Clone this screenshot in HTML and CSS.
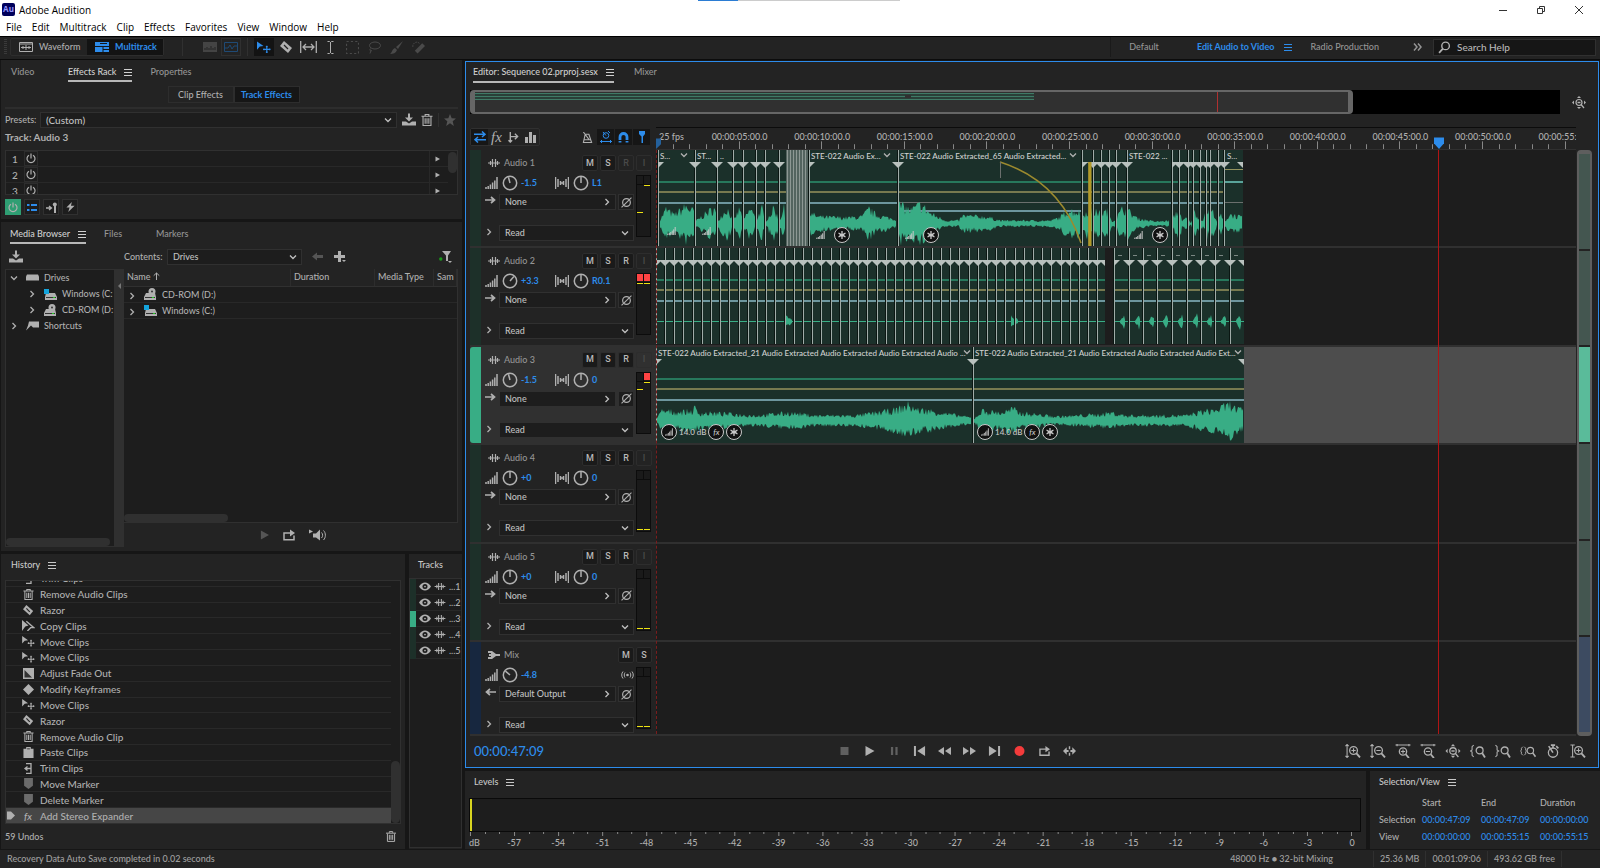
FILE: index.html
```html
<!DOCTYPE html>
<html lang="en">
<head>
    <meta charset="UTF-8">
    <meta name="viewport" content="width=device-width, initial-scale=1.0">
    <title>Adobe Audition</title>
    <link rel="stylesheet" href="styles.css">
</head>
<body>
    <!-- icon sprite -->
    <svg class="sprite" aria-hidden="true">
        <symbol id="i-menu" viewBox="0 0 8 8"><path d="M0 1.5h8M0 4.5h8M0 7.5h8" stroke="currentColor" fill="none"/></symbol>
        <symbol id="i-down" viewBox="0 0 8 8"><path d="M1 2.5l3 3 3-3" stroke="currentColor" fill="none" stroke-width="1.3"/></symbol>
        <symbol id="i-right" viewBox="0 0 8 8"><path d="M2.5 1l3 3-3 3" stroke="currentColor" fill="none" stroke-width="1.3"/></symbol>
        <symbol id="i-play" viewBox="0 0 10 10"><path d="M1 0l9 5-9 5z"/></symbol>
        <symbol id="i-current" viewBox="0 0 8 8"><path d="M0 0h4l4 4-4 4H0z"/></symbol>
        <symbol id="i-wave" viewBox="0 0 12 10"><path d="M0 5h12M2.5 3v4M4.5 1v8M7.5 1v8M9.5 3v4" stroke="currentColor" fill="none" stroke-width="1.2"/></symbol>
        <symbol id="i-waveform" viewBox="0 0 14 10"><path d="M.5.5h13v9H.5zM2 5.500h10M4 4v3M7 3v5M10 4v3M.5 2h13" stroke="currentColor" fill="none"/></symbol>
        <symbol id="i-multi" viewBox="0 0 14 10"><path d="M0 0h14v10H0z"/><path d="M0 4.500h14M8 7.500h6M5 1.500h7M8 4.500v6" stroke="#161616" fill="none"/></symbol>
        <symbol id="i-spectral" viewBox="0 0 14 10"><path d="M0 0h14v10H0z"/><path d="M2 8V6M4 8V5M6 8V6M8 8V4M10 8V6M12 8V5" stroke="#232323" fill="none"/></symbol>
        <symbol id="i-pitch" viewBox="0 0 14 10"><path d="M.5.5h13v9H.5zM1 6h3l2-3 2 4 2-3h3" stroke="currentColor" fill="none"/></symbol>
        <symbol id="i-move" viewBox="0 0 15 13"><path d="M0 0l7 5-4 .5L0 9z"/><path d="M10.500 4.500v8M6.500 8.500h8M9.500 5.500h2M9.500 11.500h2M7.500 7.500v2M13.500 7.500v2" stroke="currentColor" fill="none" stroke-width="1.200"/></symbol>
        <symbol id="i-razor" viewBox="0 0 13 13"><path d="M4 0l8 7-4 5-8-7z"/><path d="M4 4l4 4" stroke="#232323" stroke-width="1.300"/></symbol>
        <symbol id="i-slip" viewBox="0 0 17 12"><path d="M.7 0v12M16.300 0v12M3 6h11M6 3L3 6l3 3M11 3l3 3-3 3" stroke="currentColor" fill="none" stroke-width="1.300"/></symbol>
        <symbol id="i-ibeam" viewBox="0 0 8 13"><path d="M1 .5h2l1 1 1-1h2M4 1v11M1 12.500h2l1-1 1 1h2" stroke="currentColor" fill="none"/></symbol>
        <symbol id="i-marquee" viewBox="0 0 12 12"><path d="M.5.5h11v11H.5z" stroke="currentColor" fill="none" stroke-dasharray="2 2"/></symbol>
        <symbol id="i-lasso" viewBox="0 0 13 12"><ellipse cx="7" cy="4" rx="5.500" ry="3.500" stroke="currentColor" fill="none"/><path d="M3 7c-2 1-1 3 1 2M3 9l-1 3" stroke="currentColor" fill="none"/></symbol>
        <symbol id="i-brush" viewBox="0 0 13 13"><path d="M13 0L6 6l2 2zM5 7l2 2c-1 3-4 4-7 4 2-1 2-5 5-6z"/></symbol>
        <symbol id="i-heal" viewBox="0 0 14 13"><path d="M11 2l3 3-8 8-3-3z"/><path d="M1 6c-1-4 4-7 7-4" stroke="currentColor" fill="none" stroke-dasharray="2 1"/></symbol>
        <symbol id="i-search" viewBox="0 0 12 12"><circle cx="7" cy="4.500" r="3.500" stroke="currentColor" fill="none" stroke-width="1.300"/><path d="M4.500 7L1 11" stroke="currentColor" stroke-width="1.600"/></symbol>
        <symbol id="i-more" viewBox="0 0 9 8"><path d="M1 .5L4 4 1 7.500M5 .5L8 4 5 7.500" stroke="currentColor" fill="none" stroke-width="1.500"/></symbol>
        <symbol id="i-save" viewBox="0 0 14 12"><path d="M6 0h2v4h3L7 8 3 4h3zM0 8h4l3 2 3-2h4v4H0z"/></symbol>
        <symbol id="i-trash" viewBox="0 0 12 13"><path d="M0 2.500h12M4 2V.6h4V2M1.700 3v9.400h8.600V3M4 4.500v6M6 4.500v6M8 4.500v6" stroke="currentColor" fill="none" stroke-width="1.200"/></symbol>
        <symbol id="i-star" viewBox="0 0 12 12"><path d="M6 0l1.700 4.200L12 4.500 8.700 7.300 9.800 12 6 9.300 2.200 12l1.100-4.700L0 4.500l4.300-.3z"/></symbol>
        <symbol id="i-power" viewBox="0 0 10 10"><path d="M3 1.700a4 4 0 1 0 4 0M5 0v5" stroke="currentColor" fill="none" stroke-width="1.200"/></symbol>
        <symbol id="i-list" viewBox="0 0 10 8"><path d="M0 1.500h2.500M0 6.500h2.500M4 1.500h6M4 6.500h6" stroke="currentColor" fill="none" stroke-width="2"/></symbol>
        <symbol id="i-pre" viewBox="0 0 11 11"><path d="M0 6h5M3 4l2.500 2L3 8" stroke="currentColor" fill="none" stroke-width="1.300"/><path d="M7 4h3v7H8V4z"/><circle cx="8.800" cy="2.500" r="2"/></symbol>
        <symbol id="i-bolt" viewBox="0 0 9 11"><path d="M6 0L0 6h3.500L2 11l7-7H5z"/></symbol>
        <symbol id="i-back" viewBox="0 0 11 8"><path d="M0 4l5-4v2.500h6v3H5V8z"/></symbol>
        <symbol id="i-plus" viewBox="0 0 12 12"><path d="M4 0h3v4h4v3H7v4H4V7H0V4h4zM8 9h4l-2 2z"/></symbol>
        <symbol id="i-filter" viewBox="0 0 13 12"><path d="M3 0h9L9 4.500V10H7V4.500zM9 10h4l-2 2z"/><circle cx="1.800" cy="8" r="1.700" fill="#1a9a1a"/></symbol>
        <symbol id="i-drive" viewBox="0 0 13 7"><path d="M1 0h11l1 2v4H0V2z"/></symbol>
        <symbol id="i-windrive" viewBox="0 0 13 12"><path d="M2 5h9l2 4v3H1V9z"/><path d="M0 1h5v5H0z" fill="#14a4dc"/><path d="M2 9.500h10" stroke="#333"/><path d="M9 9.500h2" stroke="#2c2"/></symbol>
        <symbol id="i-cd" viewBox="0 0 13 12"><path d="M2 5h9l1 4v3H0V9z"/><circle cx="8" cy="3.500" r="3.500"/><circle cx="8" cy="3.500" r="1" fill="#333"/><path d="M1 9.500h10" stroke="#333"/><path d="M8 9.500h2" stroke="#2c2"/></symbol>
        <symbol id="i-short" viewBox="0 0 13 9"><path d="M3 0h10v6H7L5 4 0 9l2-5z"/></symbol>
        <symbol id="i-up" viewBox="0 0 7 8"><path d="M3.500 8V1M.7 3.700L3.500 1l2.800 2.700" stroke="currentColor" fill="none"/></symbol>
        <symbol id="i-loop" viewBox="0 0 12 11"><path d="M4 3.500H1v6.700h10V6M4 3.500h4" stroke="currentColor" fill="none" stroke-width="1.500"/><path d="M7 0l5 3.500L7 7z"/></symbol>
        <symbol id="i-speaker" viewBox="0 0 17 11"><path d="M0 0l4 2-4 2zM4 4h3l4-4v11L7 8H4z"/><path d="M12.500 3c1.500 1.500 1.500 4 0 5.500M14.500 1c2.500 2.500 2.500 7 0 9.500" stroke="currentColor" fill="none"/></symbol>
        <symbol id="i-copy" viewBox="0 0 12 10"><path d="M0 0l6 5-3 1-3 4z"/><path d="M4 1l7 6H8l-3 3" stroke="currentColor" fill="none" stroke-width="1.300"/></symbol>
        <symbol id="i-fade" viewBox="0 0 11 11"><path d="M0 0h11v11H0z"/><path d="M1.500 2v7.500H9z" fill="#333"/></symbol>
        <symbol id="i-key" viewBox="0 0 10 10"><path d="M5 0l5 5-5 5-5-5z"/></symbol>
        <symbol id="i-paste" viewBox="0 0 11 12"><path d="M0 2h3V0h5v2h3v10H0z"/><path d="M4 2h3" stroke="#333"/></symbol>
        <symbol id="i-trim" viewBox="0 0 7 11"><path d="M1 .7h5v9.600H1M6 5.500H0M2.500 3.500L0 5.500l2.500 2" stroke="currentColor" fill="none" stroke-width="1.300"/></symbol>
        <symbol id="i-marker" viewBox="0 0 8 10"><path d="M0 0h8v7l-4 3-4-3z" fill="#6b6b6b"/></symbol>
        <symbol id="i-eye" viewBox="0 0 11 8"><path d="M0 4c3-5 8-5 11 0-3 5-8 5-11 0z"/><circle cx="5.500" cy="4" r="2.300" fill="#1d1d1d"/><circle cx="5.500" cy="4" r=".8"/></symbol>
        <symbol id="i-swap" viewBox="0 0 12 11"><path d="M0 2.800h10M2 8.200h10M8 0l3 2.800L8 5.500M4 5.500L1 8.200 4 11" stroke="currentColor" fill="none" stroke-width="1.500"/></symbol>
        <symbol id="i-send" viewBox="0 0 11 12"><path d="M2 0v12M2 5h8M7 2l3 3-3 3M0 9l2 2 2-2" stroke="currentColor" fill="none" stroke-width="1.500"/></symbol>
        <symbol id="i-bars" viewBox="0 0 11 11"><path d="M0 5h3v6H0zM4 0h3v11H4zM8 3h3v8H8z"/></symbol>
        <symbol id="i-metro" viewBox="0 0 11 12"><path d="M3 2.500h4l3 9H1zM7 8L1 0M2 8.500h7" stroke="currentColor" fill="none" stroke-width="1.200"/></symbol>
        <symbol id="i-snaptime" viewBox="0 0 12 12"><circle cx="6" cy="4.500" r="2.800" stroke="currentColor" fill="none"/><path d="M6 4.500L3 1M8 0l2 2M0 10.500h12M2 9l-1.500 1.500L2 12M10 9l1.500 1.500L10 12" stroke="currentColor" fill="none"/></symbol>
        <symbol id="i-magnet" viewBox="0 0 11 11"><path d="M2 10.500V5a3.500 3.500 0 0 1 7 0v5.500" stroke="currentColor" fill="none" stroke-width="2.800"/><path d="M0 8.500h11" stroke="#161616"/></symbol>
        <symbol id="i-pin" viewBox="0 0 8 12"><path d="M1 0h6v3L5 5.500V12H3.500V5.500L1 3z"/></symbol>
        <symbol id="i-vol" viewBox="0 0 13 12"><path d="M1 12v-2M3.200 12V9M5.400 12V7.500M7.600 12V5.500M9.800 12V3.500M12 12V0" stroke="currentColor" fill="none" stroke-width="1.500"/></symbol>
        <symbol id="i-pan" viewBox="0 0 14 12"><path d="M.5 0v12M3 2v8M5.500 4v4M8.500 4v4M11 2v8M13.500 0v12M5 6h4" stroke="currentColor" fill="none" stroke-width="1.500"/></symbol>
        <symbol id="i-arrow" viewBox="0 0 11 8"><path d="M0 4h9M6 1l3.500 3L6 7" stroke="currentColor" fill="none" stroke-width="1.700"/></symbol>
        <symbol id="i-phase" viewBox="0 0 10 10"><circle cx="5" cy="5" r="3.500" stroke="currentColor" fill="none" stroke-width="1.100"/><path d="M.5 9.500l9-9" stroke="currentColor"/></symbol>
        <symbol id="i-mix" viewBox="0 0 12 10"><path d="M0 1h4l4 3h4v2H8L4 9H0V7h3V6H1V4h2V3H0z"/></symbol>
        <symbol id="i-mono" viewBox="0 0 13 8"><circle cx="6.500" cy="4" r="1.300"/><path d="M4 1.500c-1 1.500-1 3.500 0 5M9 1.500c1 1.500 1 3.500 0 5M2 .5c-1.700 2-1.700 5 0 7M11 .5c1.700 2 1.700 5 0 7" stroke="currentColor" fill="none"/></symbol>
        <symbol id="i-stop" viewBox="0 0 8 8"><path d="M0 0h8v8H0z"/></symbol>
        <symbol id="i-pause" viewBox="0 0 8 9"><path d="M0 0h2.500v9H0zM5 0h2.500v9H5z"/></symbol>
        <symbol id="i-prev" viewBox="0 0 10 9"><path d="M0 0h1.800v9H0zM10 0v9L3 4.500z"/></symbol>
        <symbol id="i-next" viewBox="0 0 10 9"><path d="M8.200 0H10v9H8.200zM0 0l7 4.500L0 9z"/></symbol>
        <symbol id="i-rew" viewBox="0 0 13 8"><path d="M6 0v8L0 4zM13 0v8L7 4z"/></symbol>
        <symbol id="i-ff" viewBox="0 0 13 8"><path d="M0 0l6 4-6 4zM7 0l6 4-6 4z"/></symbol>
        <symbol id="i-rec" viewBox="0 0 9 9"><circle cx="4.500" cy="4.500" r="4.500" fill="#f43b3b"/></symbol>
        <symbol id="i-skip" viewBox="0 0 14 10"><path d="M0 5l4-4v3h2v2H4v3zM14 5l-4-4v3H8v2h2v3z"/><path d="M7 0v3M7 7v3" stroke="currentColor" stroke-width="1.500"/></symbol>
        <symbol id="i-zinv" viewBox="0 0 14 13"><circle cx="7.500" cy="6" r="3.600" stroke="currentColor" fill="none" stroke-width="1.200"/><path d="M10 8.500l3.500 4" stroke="currentColor" stroke-width="1.700"/><path d="M1.500 0v13M0 2l1.500-1.500L3 2M0 11l1.500 1.500L3 11M5.500 6h4M7.500 4v4" stroke="currentColor" fill="none"/></symbol>
        <symbol id="i-zoutv" viewBox="0 0 14 13"><circle cx="7.500" cy="6" r="3.600" stroke="currentColor" fill="none" stroke-width="1.200"/><path d="M10 8.500l3.500 4" stroke="currentColor" stroke-width="1.700"/><path d="M1.500 0v13M0 2l1.500-1.500L3 2M0 11l1.500 1.500L3 11M5.500 6h4" stroke="currentColor" fill="none"/></symbol>
        <symbol id="i-zinh" viewBox="0 0 14 13"><circle cx="7" cy="7" r="3.400" stroke="currentColor" fill="none" stroke-width="1.200"/><path d="M9.500 9.500l3 3.500" stroke="currentColor" stroke-width="1.700"/><path d="M0 1h14M1.500 0v2M12.500 0v2M5 7h4M7 5v4" stroke="currentColor" fill="none"/></symbol>
        <symbol id="i-zouth" viewBox="0 0 14 13"><circle cx="7" cy="7" r="3.400" stroke="currentColor" fill="none" stroke-width="1.200"/><path d="M9.500 9.500l3 3.500" stroke="currentColor" stroke-width="1.700"/><path d="M0 1h14M1.500 0v2M12.500 0v2M5 7h4" stroke="currentColor" fill="none"/></symbol>
        <symbol id="i-zfull" viewBox="0 0 14 13"><circle cx="7" cy="6.500" r="3" stroke="currentColor" fill="none" stroke-width="1.200"/><path d="M5.500 6.500h3M9 8.500l3 3.500" stroke="currentColor" stroke-width="1.300"/><path d="M5 2l2-2 2 2zM5 11l2 2 2-2zM2 4.500v4l-2-2zM12 4.500v4l2-2z"/></symbol>
        <symbol id="i-zl" viewBox="0 0 14 13"><circle cx="8.500" cy="6" r="3.200" stroke="currentColor" fill="none" stroke-width="1.200"/><path d="M11 8.500l2.500 4" stroke="currentColor" stroke-width="1.700"/><path d="M3 1L1.500 2.500v3L0 6.500l1.500 1v3L3 12" stroke="currentColor" fill="none"/></symbol>
        <symbol id="i-zr" viewBox="0 0 14 13"><circle cx="8.500" cy="6" r="3.200" stroke="currentColor" fill="none" stroke-width="1.200"/><path d="M11 8.500l2.500 4" stroke="currentColor" stroke-width="1.700"/><path d="M0 1l1.500 1.500v3l1.500 1-1.500 1v3L0 12" stroke="currentColor" fill="none"/></symbol>
        <symbol id="i-zlr" viewBox="0 0 17 13"><circle cx="11" cy="6" r="3.400" stroke="currentColor" fill="none" stroke-width="1.200"/><path d="M13.500 8.500l3 4" stroke="currentColor" stroke-width="1.700"/><path d="M3 2L1.500 3.500v2l-1 1 1 1v2L3 11M4.500 2L6 3.500v2l1 1-1 1v2L4.500 11" stroke="currentColor" fill="none"/></symbol>
        <symbol id="i-timer" viewBox="0 0 12 13"><circle cx="6" cy="8" r="4.300" stroke="currentColor" fill="none" stroke-width="1.200"/><path d="M6 8L2 2M4 1h4M6 1v3M9 2l2 2" stroke="currentColor" fill="none" stroke-width="1.500"/></symbol>
        <symbol id="i-zsel" viewBox="0 0 14 13"><circle cx="7.500" cy="6" r="3.600" stroke="currentColor" fill="none" stroke-width="1.200"/><path d="M10 8.500l3.500 4" stroke="currentColor" stroke-width="1.700"/><path d="M0 1h4M0 12h4M2 1v11M5.500 6h4M7.500 4v4" stroke="currentColor" fill="none"/></symbol>
        <symbol id="i-asterisk" viewBox="0 0 8 8"><path d="M4 0v8M.5 2l7 4M.5 6l7-4M1.500 4h5" stroke="currentColor" stroke-width="1.300" fill="none"/></symbol>
    </svg>

    <header class="titlebar">
        <div class="title-row">
            <span class="logo">Au</span>
            <span class="app-name">Adobe Audition</span>
            <span class="behind"></span>
            <div class="win-buttons">
                <button aria-label="Minimize"><svg viewBox="0 0 10 10"><path d="M1 5.500h8" stroke="#333"/></svg></button>
                <button aria-label="Restore"><svg viewBox="0 0 10 10"><path d="M1.500 3.500h5v5h-5zM3.500 3V1.500h5v5H7" stroke="#333" fill="none"/></svg></button>
                <button aria-label="Close"><svg viewBox="0 0 10 10"><path d="M1 1l8 8M9 1L1 9" stroke="#333"/></svg></button>
            </div>
        </div>
        <nav class="menubar">
            <a href="#">File</a><a href="#">Edit</a><a href="#">Multitrack</a><a href="#">Clip</a><a href="#">Effects</a><a href="#">Favorites</a><a href="#">View</a><a href="#">Window</a><a href="#">Help</a>
        </nav>
    </header>

    <div class="toolbar">
        <span class="grip"></span>
        <div class="modes">
            <button><svg class="w14"><use href="#i-waveform"/></svg>Waveform</button>
            <button class="on"><svg class="w14"><use href="#i-multi"/></svg>Multitrack</button>
        </div>
        <span class="sep"></span>
        <div class="tools dimmed">
            <button aria-label="Spectral"><svg class="w14"><use href="#i-spectral"/></svg></button>
            <button class="boxed" aria-label="Pitch"><svg class="w14"><use href="#i-pitch"/></svg></button>
        </div>
        <span class="sep near"></span>
        <div class="tools">
            <button class="on" aria-label="Move"><svg class="w14"><use href="#i-move"/></svg></button>
            <button aria-label="Razor"><svg><use href="#i-razor"/></svg></button>
            <button aria-label="Slip"><svg class="w17"><use href="#i-slip"/></svg></button>
            <button aria-label="Time selection"><svg><use href="#i-ibeam"/></svg></button>
            <button class="off" aria-label="Marquee"><svg><use href="#i-marquee"/></svg></button>
            <button class="off" aria-label="Lasso"><svg><use href="#i-lasso"/></svg></button>
            <button class="off" aria-label="Brush"><svg><use href="#i-brush"/></svg></button>
            <button class="off" aria-label="Healing brush"><svg><use href="#i-heal"/></svg></button>
        </div>
        <div class="workspaces">
            <a href="#">Default</a>
            <a href="#" class="on">Edit Audio to Video</a>
            <svg class="w8 blue"><use href="#i-menu"/></svg>
            <a href="#" class="radio-prod">Radio Production</a>
            <svg class="w9"><use href="#i-more"/></svg>
        </div>
        <label class="search"><svg><use href="#i-search"/></svg><input type="text" placeholder="Search Help" aria-label="Search Help"></label>
    </div>

    <main class="workspace">
        <div class="left">
            <section class="panel effects">
                <div class="tabs">
                    <a href="#" class="video">Video</a>
                    <a href="#" class="on rack">Effects Rack<svg class="w8"><use href="#i-menu"/></svg></a>
                    <a href="#">Properties</a>
                </div>
                <div class="toggle">
                    <button>Clip Effects</button><button class="on">Track Effects</button>
                </div>
                <div class="presets">
                    <label for="preset">Presets:</label>
                    <span class="drop grow"><select id="preset"><option>(Custom)</option></select><svg class="w8"><use href="#i-down"/></svg></span>
                    <svg class="w14"><use href="#i-save"/></svg>
                    <svg class="w12"><use href="#i-trash"/></svg>
                    <span class="bar"></span>
                    <svg class="w12 dim"><use href="#i-star"/></svg>
                </div>
                <h2 class="track-name">Track: Audio 3</h2>
                <div class="rack-list">
                    <ol id="slots"></ol>
                    <span class="thumb"></span>
                </div>
                <div class="rack-buttons">
                    <button class="power" aria-label="Power"><svg class="w10"><use href="#i-power"/></svg></button>
                    <button class="blue" aria-label="List"><svg class="w10"><use href="#i-list"/></svg></button>
                    <button aria-label="Pre-fader"><svg class="w11"><use href="#i-pre"/></svg></button>
                    <button aria-label="Pre-render"><svg class="w9"><use href="#i-bolt"/></svg></button>
                </div>
            </section>

            <section class="panel media">
                <div class="tabs">
                    <a href="#" class="on">Media Browser<svg class="w8"><use href="#i-menu"/></svg></a>
                    <a href="#" class="files">Files</a>
                    <a href="#">Markers</a>
                </div>
                <div class="media-bar">
                    <svg class="w14"><use href="#i-save"/></svg>
                    <label for="contents">Contents:</label>
                    <span class="drop"><select id="contents"><option>Drives</option></select><svg class="w8"><use href="#i-down"/></svg></span>
                    <svg class="w11 dim"><use href="#i-back"/></svg>
                    <svg class="w12"><use href="#i-plus"/></svg>
                    <svg class="w13 end"><use href="#i-filter"/></svg>
                </div>
                <div class="media-body">
                    <div class="tree">
                        <ul>
                            <li><svg class="w8"><use href="#i-down"/></svg><svg class="w13"><use href="#i-drive"/></svg>Drives</li>
                            <li class="sub"><svg class="w8"><use href="#i-right"/></svg><svg class="w13"><use href="#i-windrive"/></svg>Windows (C:</li>
                            <li class="sub"><svg class="w8"><use href="#i-right"/></svg><svg class="w13"><use href="#i-cd"/></svg>CD-ROM (D:</li>
                            <li><svg class="w8"><use href="#i-right"/></svg><svg class="w13"><use href="#i-short"/></svg>Shortcuts</li>
                        </ul>
                        <span class="hthumb"></span>
                    </div>
                    <div class="splitter"></div>
                    <div class="files-pane">
                        <div class="files-list">
                            <table>
                                <thead><tr><th>Name<svg class="w7"><use href="#i-up"/></svg></th><th class="c-dur">Duration</th><th class="c-type">Media Type</th><th class="c-samp">Sam</th></tr></thead>
                                <tbody>
                                    <tr><td colspan="4"><svg class="w8"><use href="#i-right"/></svg><svg class="w13"><use href="#i-cd"/></svg>CD-ROM (D:)</td></tr>
                                    <tr><td colspan="4"><svg class="w8"><use href="#i-right"/></svg><svg class="w13"><use href="#i-windrive"/></svg>Windows (C:)</td></tr>
                                </tbody>
                            </table>
                            <span class="hthumb"></span>
                        </div>
                        <div class="preview">
                            <button class="dim" aria-label="Play"><svg class="w9"><use href="#i-play"/></svg></button>
                            <button aria-label="Loop"><svg class="w12"><use href="#i-loop"/></svg></button>
                            <button aria-label="Auto-play"><svg class="w17"><use href="#i-speaker"/></svg></button>
                        </div>
                    </div>
                </div>
            </section>

            <div class="left-bottom">
                <section class="panel history">
                    <div class="tabs"><a href="#" class="plain">History<svg class="w8"><use href="#i-menu"/></svg></a></div>
                    <div class="history-box">
                        <ul id="history"></ul>
                        <span class="thumb"></span>
                    </div>
                    <div class="history-foot"><span>59 Undos</span><svg class="w10"><use href="#i-trash"/></svg></div>
                </section>
                <section class="panel tracklist">
                    <div class="tabs"><a href="#" class="plain">Tracks</a></div>
                    <ul id="tracklist"></ul>
                </section>
            </div>
        </div>

        <div class="right">
            <section class="panel editor">
                <div class="tabs">
                    <a href="#" class="on">Editor: Sequence 02.prproj.sesx<svg class="w8"><use href="#i-menu"/></svg></a>
                    <a href="#" class="mixer">Mixer</a>
                </div>
                <div class="overview">
                    <div class="range"><div class="window"><span class="lines"></span><span class="pos"></span></div></div>
                    <svg class="w14"><use href="#i-zfull"/></svg>
                </div>
                <div class="ruler-row">
                    <div class="controls">
                        <div class="group">
                            <button class="blue" aria-label="Inputs/Outputs"><svg class="w12"><use href="#i-swap"/></svg></button>
                            <button aria-label="Effects"><i>fx</i></button>
                            <button aria-label="Sends"><svg class="w11"><use href="#i-send"/></svg></button>
                            <button aria-label="EQ"><svg class="w11"><use href="#i-bars"/></svg></button>
                        </div>
                        <div class="group snap">
                            <button aria-label="Metronome"><svg class="w11"><use href="#i-metro"/></svg></button>
                            <button class="blue" aria-label="Time stretch"><svg class="w12"><use href="#i-snaptime"/></svg></button>
                            <button class="blue" aria-label="Snapping"><svg class="w11"><use href="#i-magnet"/></svg></button>
                            <button class="blue" aria-label="Marker"><svg class="w8 tall"><use href="#i-pin"/></svg></button>
                        </div>
                    </div>
                    <div class="ruler" id="ruler"></div>
                </div>
                <div class="session">
                    <div class="rows" id="rows">
                        <div class="overlay"><span class="playhead"></span></div>
                    </div>
                    <div class="vscroll"><i></i><i></i><i class="sel"></i><i></i><i></i><i class="mix"></i></div>
                </div>
                <div class="transport">
                    <output class="time">00:00:47:09</output>
                    <div class="t-buttons" id="transport"></div>
                    <div class="z-buttons" id="zooms"></div>
                </div>
            </section>

            <div class="right-bottom">
                <section class="panel levels">
                    <div class="tabs"><a href="#" class="plain">Levels<svg class="w8"><use href="#i-menu"/></svg></a></div>
                    <div class="level-meter"><span class="peak"></span></div>
                    <div class="scale" id="scale"></div>
                </section>
                <section class="panel selview">
                    <div class="tabs"><a href="#" class="plain">Selection/View<svg class="w8"><use href="#i-menu"/></svg></a></div>
                    <table>
                        <tr><td></td><th>Start</th><th>End</th><th>Duration</th></tr>
                        <tr><th>Selection</th><td>00:00:47:09</td><td>00:00:47:09</td><td>00:00:00:00</td></tr>
                        <tr><th>View</th><td>00:00:00:00</td><td>00:00:55:15</td><td>00:00:55:15</td></tr>
                    </table>
                </section>
            </div>
        </div>
    </main>

    <footer class="status">
        <span class="msg">Recovery Data Auto Save completed in 0.02 seconds</span>
        <span class="rate">48000 Hz ● 32-bit Mixing</span>
        <span class="cell">25.36 MB</span>
        <span class="cell">00:01:09:06</span>
        <span class="cell last">493.62 GB free</span>
    </footer>
    <script src="script.js"></script>
</body>
</html>
```
FILE: styles.css
```css
* {
    box-sizing: border-box;
}
body {
    margin: 0;
    height: 100vh;
    display: flex;
    flex-direction: column;
    overflow: hidden;
    background-color: #161616;
    color: #b0b0b0;
    font-family: Lato, sans-serif;
    font-size: 9px;
    font-weight: 500;
    line-height: 16px;
}
a {
    color: inherit;
    text-decoration: none;
}
button, select, input {
    font: inherit;
    color: inherit;
    margin: 0;
    padding: 0;
    border: 0;
    background: none;
}
ul, ol {
    list-style: none;
    margin: 0;
    padding: 0;
}
svg {
    fill: currentColor;
    width: 13px;
    height: 13px;
    flex: none;
}
.sprite {
    position: absolute;
    width: 0;
    height: 0;
}
.w7 { width: 7px; height: 8px; }
.w8 { width: 8px; height: 8px; }
.w9 { width: 9px; height: 10px; }
.w10 { width: 10px; height: 11px; }
.w11 { width: 11px; height: 11px; }
.w12 { width: 12px; height: 12px; }
.w13 { width: 13px; height: 12px; }
.w14 { width: 14px; height: 13px; }
.w17 { width: 17px; height: 12px; }
.tall { height: 12px; }
.blue { color: #2d8ceb; }
.dim { color: #555; }

/* title and menu */
.titlebar {
    flex: none;
    height: 36px;
    background-color: #fff;
    color: #000;
    font-family: "Open Sans", sans-serif;
    font-size: 10px;
    font-weight: normal;
}
.title-row {
    display: flex;
    align-items: center;
    height: 19px;
    padding-left: 2px;
}
.logo {
    width: 13px;
    height: 13px;
    border-radius: 2px;
    background-color: #00005b;
    color: #9999ff;
    font-size: 8px;
    font-weight: bold;
    line-height: 12px;
    text-align: center;
}
.app-name {
    margin-left: 4px;
}
.behind {
    align-self: flex-start;
    width: 202px;
    height: 1px;
    margin-left: 38%;
    background: linear-gradient(90deg, #2b7cd3 40px, #ccc 40px);
}
.win-buttons {
    display: flex;
    gap: 28px;
    margin-left: auto;
    padding-right: 16px;
}
.win-buttons button, .win-buttons svg {
    display: block;
    width: 10px;
    height: 10px;
}
.menubar {
    display: flex;
    gap: 10px;
    padding-left: 6px;
}

/* toolbar */
.toolbar {
    flex: none;
    display: flex;
    align-items: center;
    height: 24px;
    padding: 0 4px 2px;
    border-top: 1px solid #000;
    border-bottom: 1px solid #0c0c0c;
    background-color: #232323;
}
.grip {
    width: 3px;
    height: 16px;
    background: repeating-linear-gradient(#3a3a3a 0 1px, transparent 1px 2px);
}
.modes {
    display: flex;
    margin-left: 3px;
    border: 1px solid #2d2d2d;
    border-radius: 2px;
}
.modes button {
    display: flex;
    align-items: center;
    gap: 6px;
    width: 76px;
    height: 16px;
    padding-left: 8px;
}
.modes svg {
    height: 10px;
}
.modes .on, .tools .on {
    background-color: #131313;
    color: #2d8ceb;
}
.modes .on {
    font-weight: bold;
}
.sep {
    width: 1px;
    height: 18px;
    margin: 0 17px 0 18px;
    background-color: #303030;
}
.sep.near {
    margin: 0 6px;
}
.tools {
    display: flex;
    gap: 2px;
}
.tools button {
    display: flex;
    align-items: center;
    justify-content: center;
    width: 20px;
    height: 18px;
}
.tools .off {
    color: #4a4a4a;
}
.dimmed {
    gap: 1px;
    color: #444;
}
.dimmed .boxed {
    border: 1px solid #303030;
    color: #1f4a75;
}
.dimmed svg {
    height: 10px;
}
.workspaces {
    display: flex;
    align-items: center;
    height: 20px;
    margin-left: auto;
    padding-left: 18px;
    border-left: 1px solid #1a1a1a;
    color: #959595;
}
.workspaces .on {
    margin: 0 10px 0 38px;
    color: #2d8ceb;
    font-weight: bold;
}
.workspaces .radio-prod {
    margin: 0 34px 0 18px;
}
.workspaces .w9 {
    height: 8px;
    margin-right: 11px;
}
.search {
    display: flex;
    align-items: center;
    width: 163px;
    height: 17px;
    border: 1px solid #303030;
    background-color: #161616;
    font-size: 10px;
}
.search svg {
    margin: 0 6px 0 4px;
}
.search input {
    width: 120px;
}
.search input::placeholder {
    color: #b8b8b8;
}

/* panels */
.workspace {
    flex: 1;
    min-height: 0;
    display: grid;
    grid-template-columns: 462fr 1135fr;
    gap: 3px;
}
.left, .right {
    min-width: 0;
    min-height: 0;
    display: flex;
    flex-direction: column;
    gap: 3px;
}
.left {
    padding-left: 1px;
}
.panel {
    min-width: 0;
    background-color: #232323;
}
.tabs {
    display: flex;
    align-items: flex-start;
    height: 24px;
    padding: 3px 9px 0;
    color: #959595;
}
.tabs a {
    display: flex;
    align-items: center;
    height: 19px;
    white-space: nowrap;
    border-bottom: 2px solid transparent;
}
.tabs svg {
    margin-left: 8px;
}
.tabs .on {
    border-color: #b8b8b8;
    color: #d0d0d0;
}
.tabs .plain {
    color: #c8c8c8;
}

/* effects rack */
.effects {
    flex: none;
    height: 159px;
    padding: 0 4px;
}
.effects .tabs {
    padding-left: 6px;
}
.video {
    width: 57px;
}
.effects .rack, .media .on {
    margin-right: 18px;
}
.toggle {
    display: flex;
    justify-content: center;
    padding: 0 0 4px 4px;
    margin-top: 2px;
    border-bottom: 2px solid #2d2d2d;
}
.toggle button {
    width: 66px;
    height: 17px;
    border: 1px solid #2d2d2d;
    line-height: 15px;
}
.toggle .on {
    background-color: #161616;
    color: #2d8ceb;
    font-weight: bold;
}
.presets {
    display: flex;
    align-items: center;
    gap: 5px;
    height: 20px;
    padding: 1px 2px 0 0;
}
.presets label {
    width: 30px;
    white-space: nowrap;
}
.presets .drop {
    font-size: 10px;
}
.presets .bar {
    width: 1px;
    height: 14px;
    background-color: #303030;
}
.drop {
    display: grid;
    align-items: center;
    height: 16px;
    border: 1px solid #303030;
    background-color: #1d1d1d;
    color: #c0c0c0;
}
.drop > * {
    grid-area: 1 / 1;
}
.drop select {
    appearance: none;
    width: 100%;
    height: 14px;
    padding-left: 5px;
    line-height: 14px;
}
.drop svg {
    justify-self: end;
    margin-right: 4px;
    pointer-events: none;
}
.grow {
    flex: 1;
}
.track-name {
    margin: 0;
    height: 21px;
    font-size: 10px;
    line-height: 16px;
}
.rack-list {
    display: flex;
    height: 45px;
    overflow: hidden;
    border: 1px solid #303030;
    background-color: #1d1d1d;
    font-size: 10px;
}
.rack-list ol {
    flex: 1;
}
.rack-list li {
    display: flex;
    align-items: center;
    height: 16px;
    border-bottom: 1px solid #282828;
}
.rack-list .num {
    width: 16px;
    padding-left: 6px;
}
.rack-list .power-cell {
    display: grid;
    place-items: center;
    width: 14px;
    height: 15px;
    margin-left: 2px;
    border: 1px solid #2d2d2d;
}
.rack-list .play-cell {
    margin-left: auto;
    padding: 3px 8px 0 5px;
    height: 16px;
    border-left: 1px solid #282828;
    line-height: 10px;
}
.play-cell svg {
    width: 5px;
    height: 8px;
}
.thumb {
    width: 9px;
    border-radius: 5px;
    background-color: #303030;
}
.rack-list .thumb {
    height: 21px;
    margin-top: 1px;
}
.rack-buttons {
    display: flex;
    gap: 3px;
    margin-top: 4px;
}
.rack-buttons button {
    display: grid;
    place-items: center;
    width: 16px;
    height: 16px;
    border: 1px solid #303030;
    background-color: #1d1d1d;
}
.rack-buttons .power {
    border-color: #2f9e73;
    background-color: #2f9e73;
}

/* media browser */
.media {
    flex: 328;
    min-height: 0;
    display: flex;
    flex-direction: column;
    padding: 0 4px 4px;
}
.media .tabs {
    padding-left: 5px;
}
.files {
    width: 52px;
}
.media-bar {
    display: flex;
    align-items: center;
    height: 23px;
    padding: 0 6px 2px 4px;
}
.media-bar label {
    width: 43px;
    margin-left: 101px;
}
.media-bar .drop {
    width: 135px;
    margin-right: 10px;
}
.media-bar .dim {
    margin-right: 11px;
}
.media-bar .end {
    margin-left: auto;
}
.media-body {
    flex: 1;
    min-height: 0;
    display: flex;
}
.tree {
    display: flex;
    flex-direction: column;
    width: 110px;
    overflow: hidden;
    border: 1px solid #303030;
    background-color: #1d1d1d;
    white-space: nowrap;
}
.tree ul, .files-list table {
    margin-bottom: auto;
}
.tree li {
    display: flex;
    align-items: center;
    height: 16px;
    padding-left: 4px;
}
.tree .sub {
    padding-left: 22px;
}
.tree .w13, td .w13 {
    margin: 0 5px 0 8px;
}
.hthumb {
    width: 104px;
    height: 8px;
    border-radius: 4px;
    background-color: #303030;
}
.splitter {
    display: flex;
    width: 9px;
    padding: 14px 0 0 3px;
    background-color: #303030;
}
.splitter::before {
    content: "";
    width: 0;
    height: 0;
    border: 3px solid transparent;
    border-left: 0;
    border-right-color: #777;
}
.files-pane {
    flex: 1;
    min-width: 0;
    display: flex;
    flex-direction: column;
}
.files-list {
    flex: 1;
    display: flex;
    flex-direction: column;
    overflow: hidden;
    background-color: #1d1d1d;
    border: solid #303030;
    border-width: 0 1px 1px 0;
}
.files-list table {
    width: 100%;
    table-layout: fixed;
    border-collapse: collapse;
}
.files-list th {
    height: 17px;
    padding: 0 0 0 3px;
    overflow: hidden;
    background-color: #232323;
    border-bottom: 1px solid #303030;
    border-right: 1px solid #2d2d2d;
    font-weight: 500;
    text-align: left;
    white-space: nowrap;
}
.files-list th svg {
    margin-left: 3px;
}
.c-dur { width: 84px; }
.c-type { width: 59px; }
.c-samp { width: 23px; }
.files-list td {
    height: 16px;
    padding: 0 0 0 4px;
    border-bottom: 1px solid #282828;
    line-height: 15px;
}
td svg {
    vertical-align: -2px;
}
.preview {
    display: flex;
    align-items: center;
    justify-content: center;
    gap: 14px;
    height: 24px;
    padding-left: 4px;
}
.preview svg {
    display: block;
}

/* history and tracks */
.left-bottom {
    flex: 297;
    min-height: 0;
    display: flex;
    gap: 4px;
}
.left-bottom .tabs {
    height: 26px;
    padding-top: 2px;
}
.history {
    flex: 1;
    display: flex;
    flex-direction: column;
    padding: 0 4px;
    font-size: 10px;
}
.history .tabs {
    padding-left: 6px;
    font-size: 9px;
}
.history-box {
    flex: 1;
    display: flex;
    align-items: flex-end;
    overflow: hidden;
    border: 1px solid #303030;
    background-color: #1d1d1d;
}
.history-box ul {
    flex: 1;
    display: flex;
    flex-direction: column;
    height: 253px;
}
.history-box li {
    flex: 1;
    display: grid;
    grid-template-columns: 10px 24px 1fr;
    align-items: center;
    justify-items: center;
    border-top: 1px solid #292929;
    line-height: 14px;
}
.history-box li span {
    justify-self: start;
}
.history-box li svg {
    height: 11px;
}
.history-box .current {
    background-color: #464646;
}
.history-box .thumb {
    height: 62px;
}
.history-foot {
    display: flex;
    align-items: center;
    justify-content: space-between;
    height: 25px;
    padding-right: 5px;
}
.history-foot span {
    font-size: 9px;
}
.tracklist {
    width: 53px;
    display: flex;
    flex-direction: column;
}
.tracklist .tabs {
    height: 24px;
}
.tracklist ul {
    flex: 1;
    margin-bottom: 1px;
    border: 1px solid #303030;
    background-color: #1d1d1d;
}
.tracklist li {
    display: flex;
    align-items: center;
    gap: 3px;
    height: 16px;
    border-bottom: 1px solid #282828;
    line-height: 14px;
}
.tracklist li::before {
    content: "";
    flex: none;
    width: 6px;
    height: 16px;
    background-color: #1d3029;
}
.tracklist .sel::before {
    background-color: #38ad85;
}
.tracklist li svg {
    width: 12px;
    height: 9px;
}

/* editor */
.editor {
    flex: 1;
    min-height: 0;
    display: flex;
    flex-direction: column;
    margin-top: 1px;
    margin-right: 1px;
    padding: 0 5px 0 4px;
    border: 1px solid #2d8ceb;
}
.editor .tabs {
    height: 25px;
    padding: 1px 3px 0;
}
.editor .tabs a {
    height: 20px;
}
.editor .mixer {
    margin-left: 20px;
}
.overview {
    display: flex;
    align-items: center;
    justify-content: space-between;
    height: 30px;
    padding-right: 7px;
}
.range {
    flex: 1;
    height: 24px;
    margin-right: 12px;
    background-color: #000;
}
.window {
    position: relative;
    width: 81%;
    height: 24px;
    border: 2px solid #666;
    border-width: 2px 5px;
    border-radius: 4px;
    background-color: #303030;
}
.lines {
    position: absolute;
    top: 1px;
    left: 0;
    width: 64%;
    height: 7px;
    background: repeating-linear-gradient(#3f7a66 0 1px, #2a3f38 1px 3px);
}
.lines::after {
    content: "";
    position: absolute;
    left: 77%;
    top: 2px;
    width: 6px;
    height: 3px;
    background-color: #303030;
}
.pos {
    position: absolute;
    top: 0;
    left: 85%;
    width: 1px;
    height: 20px;
    background-color: #b03030;
}
.ruler-row {
    display: flex;
    height: 33px;
    padding: 10px 17px 0 0;
}
.controls {
    display: flex;
    align-items: center;
    justify-content: space-between;
    width: 186px;
    padding: 0 6px 3px 0;
}
.group {
    display: flex;
    border: 1px solid #303030;
    border-radius: 2px;
}
.group button {
    display: grid;
    place-items: center;
    width: 17px;
    height: 16px;
}
.group i {
    font-family: "Liberation Serif", serif;
    font-size: 15px;
    line-height: 14px;
}
.group .blue {
    background-color: #161616;
}
.snap {
    border: 0;
    gap: 1px;
}
.ruler {
    position: relative;
    flex: 1;
    overflow: hidden;
    border-top: 1px solid #0c0c0c;
    border-bottom: 1px solid #303030;
}
.ruler span {
    position: absolute;
    top: 1px;
    width: 80px;
    margin-left: -39px;
    text-align: center;
}
.ruler .fps {
    left: 42px;
    text-align: left;
}
.ruler .last-label {
    margin-left: -26px;
    text-align: left;
}
.ruler svg {
    position: absolute;
    inset: 0;
    width: 100%;
    height: 100%;
}
.session {
    flex: 1;
    min-height: 0;
    display: flex;
}
.rows {
    position: relative;
    flex: 1;
    display: flex;
    flex-direction: column;
    border-bottom: 2px solid #303030;
}
.row {
    flex: 98;
    min-height: 0;
    display: flex;
    border-bottom: 2px solid #303030;
}
.row.mix {
    flex: 93;
    border: 0;
}
.head {
    display: flex;
    width: 186px;
    height: 100%;
}
.head::before {
    content: "";
    width: 11px;
    background-color: #1d3029;
}
.mix .head::before {
    background-color: #17273f;
}
.selected .head {
    background-color: #303030;
}
.selected .head::before {
    border-radius: 3px 0 0 3px;
    background-color: #38ad85;
}
.strip {
    flex: 1;
    padding: 5px 4px 0;
}
.name-line, .knob-line, .send-line, .read-line {
    display: flex;
    align-items: center;
    height: 16px;
}
.name-line svg {
    width: 12px;
    height: 10px;
    margin: 0 4px 0 3px;
}
.name-line .name {
    margin-right: auto;
    color: #959595;
}
.name-line button {
    width: 16px;
    height: 16px;
    margin-left: 2px;
    border: 1px solid #2d2d2d;
    border-radius: 2px;
    background-color: #1a1a1a;
    color: #b8b8b8;
    font-family: Roboto, sans-serif;
    line-height: 13px;
}
.name-line .na {
    background: none;
    color: #4a4a4a;
}
.lower {
    display: flex;
    margin-top: 4px;
}
.lines-col {
    width: 149px;
}
.knob-line svg {
    height: 12px;
}
.knob-line .knob {
    width: 16px;
    height: 16px;
    margin: 0 3px 0 4px;
}
.knob-line output {
    width: 34px;
    color: #2d8ceb;
    font-weight: bold;
}
.knob-line .mono {
    margin-left: auto;
    width: 13px;
    height: 8px;
}
.send-line {
    margin-top: 3px;
}
.send-line > .w11 {
    height: 8px;
    margin: 0 3px 4px 0;
}
.send-line > .flip {
    transform: rotate(180deg);
}
.send-line .drop, .read-line .drop {
    flex: 1;
}
.send-line button {
    display: grid;
    place-items: center;
    width: 16px;
    height: 16px;
    margin-left: 2px;
    border: 1px solid #303030;
    background-color: #1d1d1d;
}
.read-line {
    margin-top: 15px;
}
.read-line > svg {
    margin: 0 6px 2px 0;
}
.meter {
    position: relative;
    width: 15px;
    height: 62px;
    margin-left: 2px;
    background-color: #1a1a1a;
    border: 1px solid #0c0c0c;
}
.meter::before {
    content: "";
    position: absolute;
    top: 0;
    left: 0;
    width: 13px;
    height: 8px;
    border-bottom: 1px solid #0c0c0c;
    background: linear-gradient(90deg, transparent 6px, #0c0c0c 6px 7px, transparent 7px);
}
.meter i {
    position: absolute;
    width: 6px;
}
.meter .l { left: 0; }
.meter .r { right: 0; }
.meter .tick { height: 1px; background-color: #eee312; }
.meter .clip { top: 0; height: 7px; background-color: #f44; }
.lane {
    position: relative;
    flex: 1;
    min-width: 0;
    height: 100%;
    overflow: hidden;
    background-color: #1d1d1d;
}
.selected .lane {
    background-color: #4d4d4d;
}
.lane .art {
    display: block;
    width: 100%;
    height: 96px;
}
.lane .label {
    position: absolute;
    top: 0;
    font-size: 8px;
    line-height: 12px;
    color: #d0d0d0;
    white-space: nowrap;
}
.lane .chev {
    position: absolute;
    top: 1px;
}
.badges {
    position: absolute;
    top: 77px;
    display: flex;
    align-items: center;
    gap: 2px;
    color: #c8c8c8;
    font-size: 8px;
}
.badges .bars {
    width: 9px;
    height: 8px;
}
.badges b {
    width: 5px;
}
.badges .ring {
    display: grid;
    place-items: center;
    width: 16px;
    height: 16px;
    border: 1px solid #c8c8c8;
    border-radius: 50%;
    background-color: #111;
    line-height: 12px;
}
.badges .ring svg {
    width: 8px;
    height: 8px;
}
.overlay {
    position: absolute;
    z-index: 1;
    top: 0;
    bottom: 0;
    left: 186px;
    right: 0;
    border-left: 1px dashed #7a1d1d;
    pointer-events: none;
}
.playhead {
    position: absolute;
    top: 0;
    bottom: 0;
    left: 85%;
    width: 1px;
    background-color: #b01515;
}
.vscroll {
    display: flex;
    flex-direction: column;
    gap: 2px;
    width: 15px;
    margin: 0 1px;
    border: 2px solid #5e5e5e;
    border-width: 4px 2px;
    border-radius: 4px;
    background-color: #232323;
}
.vscroll i {
    flex: 1;
    background-color: #445650;
}
.vscroll .sel {
    background-color: #5abb9a;
}
.vscroll .mix {
    background-color: #3d4b61;
}
.transport {
    display: flex;
    align-items: center;
    height: 31px;
    padding: 0 3px 1px 4px;
}
.time {
    width: 358px;
    color: #2d8ceb;
    font-size: 13px;
}
.t-buttons, .z-buttons {
    display: flex;
}
.z-buttons {
    margin-left: auto;
}
.t-buttons button, .z-buttons button {
    display: grid;
    place-items: center;
    width: 25px;
    height: 20px;
    color: #b0b0b0;
}
.t-buttons .off {
    color: #606060;
}
.t-buttons svg {
    width: 13px;
    height: 10px;
}
.t-buttons .off svg {
    height: 8px;
}
.z-buttons svg {
    width: 16px;
    height: 14px;
}

/* bottom right */
.right-bottom {
    flex: none;
    display: flex;
    gap: 4px;
    height: 78px;
}
.levels {
    flex: 1;
    padding: 0 5px 0 4px;
}
.levels .tabs, .selview .tabs {
    height: 27px;
    padding: 2px 0 0 5px;
}
.level-meter {
    height: 34px;
    border: 1px solid #0a0a0a;
    background-color: #1d1d1d;
}
.peak {
    display: block;
    width: 2px;
    height: 32px;
    background-color: #d8d420;
}
.scale {
    position: relative;
    height: 17px;
    margin: 0 9px 0 1px;
}
.scale svg {
    display: block;
    width: 100%;
    height: 5px;
}
.scale span {
    position: absolute;
    top: 4px;
    width: 30px;
    margin-left: -15px;
    line-height: 13px;
    text-align: center;
}
.scale .unit {
    margin-left: -1px;
    text-align: left;
}
.selview {
    width: 230px;
    padding-left: 4px;
}
.selview .tabs {
    height: 23px;
}
.selview table {
    border-spacing: 0;
    line-height: 17px;
}
.selview th, .selview td {
    min-width: 59px;
    padding: 0;
    font-weight: 500;
    text-align: left;
}
.selview tr > :first-child {
    min-width: 48px;
    padding: 0 0 0 5px;
}
.selview td {
    color: #2d8ceb;
}

/* status */
.status {
    flex: none;
    display: flex;
    align-items: center;
    height: 19px;
    padding-left: 7px;
    border-top: 1px solid #161616;
    background-color: #232323;
    color: #a0a0a0;
}
.rate {
    margin-left: auto;
    margin-right: 40px;
}
.cell {
    padding: 0 6px;
    border-left: 1px solid #303030;
}
.last {
    margin-right: 38px;
    border-right: 1px solid #303030;
}
```
FILE: script.js
```javascript
const icon = (name, cls = '') => `<svg class="${cls}"><use href="#i-${name}"/></svg>`;
const byId = id => document.getElementById(id);

// effects rack slots
byId('slots').innerHTML = [1, 2, 3].map(n =>
    `<li><span class="num">${n}</span><span class="power-cell">${icon('power', 'w10')}</span><span class="play-cell">${icon('play')}</span></li>`
).join('');

// history
const history = [
    ['trim', 'Trim Clips'], ['trash', 'Remove Audio Clips'], ['razor', 'Razor'], ['copy', 'Copy Clips'],
    ['move', 'Move Clips'], ['move', 'Move Clips'], ['fade', 'Adjust Fade Out'], ['key', 'Modify Keyframes'],
    ['move', 'Move Clips'], ['razor', 'Razor'], ['trash', 'Remove Audio Clip'], ['paste', 'Paste Clips'],
    ['trim', 'Trim Clips'], ['marker', 'Move Marker'], ['marker', 'Delete Marker'], ['fx', 'Add Stereo Expander']
];
byId('history').innerHTML = history.map(([ic, text], i) => {
    const last = i === history.length - 1;
    return `<li class="${last ? 'current' : ''}">${last ? icon('current', 'w8') : '<b></b>'}${ic === 'fx' ? '<i>fx</i>' : icon(ic)}<span>${text}</span></li>`;
}).join('');

byId('tracklist').innerHTML = [1, 2, 3, 4, 5].map(n =>
    `<li class="${n === 3 ? 'sel' : ''}">${icon('eye')}${icon('wave')}<span>...${n}</span></li>`
).join('');

// transport and zoom buttons
byId('transport').innerHTML = ['stop', 'play', 'pause', 'prev', 'rew', 'ff', 'next', 'rec', 'loop', 'skip'].map(n =>
    `<button aria-label="${n}" class="${n === 'stop' || n === 'pause' ? 'off' : ''}">${icon(n)}</button>`).join('');
byId('zooms').innerHTML = ['zinv', 'zoutv', 'zinh', 'zouth', 'zfull', 'zl', 'zr', 'zlr', 'timer', 'zsel'].map(n =>
    `<button aria-label="${n}">${icon(n)}</button>`).join('');

// timeline units: 920 wide, 5 seconds = 82.6
const W = 920;
const SEC = 16.52;
const pct = x => (x / W * 100) + '%';

let ticks = '';
let labels = '<span class="fps">25 fps</span>';
for (let s = 1; s < 56; s++) {
    const x = Math.round(s * SEC) + 0.5;
    ticks += `M${x} ${s % 5 ? 17 : 14}V22`;
    if (s % 5 === 0) {
        const last = s === 55;
        labels += `<span class="${last ? 'last-label' : ''}" style="left:${pct(s * SEC)}">00:00:${String(s).padStart(2, '0')}:${last ? '' : '00.0'}</span>`;
    }
}
byId('ruler').innerHTML = labels +
    `<svg viewBox="0 0 ${W} 22" preserveAspectRatio="none"><path d="${ticks}" stroke="#8a8a8a" fill="none"/>
    <path d="M0 11h5v6l-5 5z" fill="#24619c"/><path d="M778 10h10v6l-5 6-5-6z" fill="#2d8ceb"/></svg>`;

// level scale
let marks = '';
let db = '<span class="unit" style="left:0%">dB</span>';
for (let i = 0; i <= 60; i++) {
    const x = Math.round(i * 14.67) + 0.5;
    marks += `M${x} 0V${i % 3 ? 2 : 4}`;
    if (i && i % 3 === 0) db += `<span style="left:${i / 60 * 100}%">${i - 60}</span>`;
}
byId('scale').innerHTML = `<svg viewBox="0 0 881 5" preserveAspectRatio="none"><path d="${marks}" stroke="#8a8a8a" fill="none"/></svg>` + db;

// waveform from envelope points [x, amplitude]
let seed = 7;
function rnd() {
    seed = (seed * 16807) % 2147483647;
    return seed / 2147483647;
}
function wave(points) {
    let top = '';
    let bottom = '';
    for (let k = 0; k < points.length - 1; k++) {
        const [x0, a0] = points[k];
        const [x1, a1] = points[k + 1];
        for (let x = x0; x < x1; x++) {
            const a = a0 + (a1 - a0) * (x - x0) / (x1 - x0);
            top += `L${x} ${(73.5 - a * (0.5 + rnd() * 0.75)).toFixed(1)}`;
            bottom = `L${x} ${(73.5 + a * (0.5 + rnd() * 0.75)).toFixed(1)}` + bottom;
        }
    }
    return `<path d="M${points[0][0]} 73.5${top}${bottom}z" fill="#38ad85"/>`;
}
const hline = (x0, x1, y, color, w = 1) => `<path d="M${x0} ${y}H${x1}" stroke="${color}" stroke-width="${w}"/>`;
const rect = (x0, x1) => `<rect x="${x0}" width="${x1 - x0}" height="96" fill="#1b302a"/>`;
const edge = x => `<path d="M${x - 0.5} 0v96" stroke="#0a1612"/><path d="M${x + 0.5} 0v96" stroke="#a0aca8"/>`;
const fadeIn = x => `<path d="M${x} 12h6l-6 6z" fill="#b9c1be"/>`;
const fadeOut = x => `<path d="M${x} 12h-6l6 6z" fill="#b9c1be"/>`;
const cuts = list => list.map((x, i) => edge(x) + fadeIn(x) + (i ? fadeOut(x) : '')).join('');
const params = (x0, x1) => hline(x0, x1, 32, '#27785c', 2) + hline(x0, x1, 42, '#77794f', 2) + hline(x0, x1, 53, '#6d969e', 2);

// burst shaped envelope between two cuts
const burst = (a, b, h) => [[a, 2], [a + Math.round((b - a) * 0.25), h * 0.5], [a + Math.round((b - a) * 0.65), h], [b - 1, h * 0.4], [b, 0]];

function lane1() {
    const cut = [2, 39, 61, 77, 87, 100, 109, 123];
    const mid = [426, 437, 445, 453, 460, 471];
    const tail = [516, 523, 532, 537, 544, 550, 554, 562, 568];
    let s = rect(2, 587) + params(2, 130) + params(153, 242);
    s += hline(242, 568, 32, '#27785c', 2) + hline(242, 568, 42, '#77794f', 2) + hline(242, 587, 52.5, '#6b6f6d');
    s += hline(242, 426, 61, '#6d969e', 2) + hline(426, 568, 53, '#6d969e', 2);
    s += hline(568, 587, 19.5, '#94945f') + hline(568, 587, 32, '#5aa39a', 2);
    s += wave([[4, 4], [10, 15], [18, 9], [30, 18], [39, 12]]) + wave([[40, 3], [52, 12], [58, 16], [61, 8]]);
    for (let i = 2; i < cut.length; i++) s += wave(burst(cut[i], cut[i + 1] || 130, 16));
    s += wave([[153, 11], [163, 7], [190, 6], [206, 7], [213, 15], [220, 9], [241, 4]]);
    s += wave([[242, 20], [255, 14], [265, 20], [275, 10], [290, 3], [303, 3], [306, 8], [330, 7], [345, 3], [395, 3], [405, 7], [412, 14], [425, 12]]);
    s += wave([[426, 8], [432, 14], [445, 11], [452, 13], [456, 3], [458, 3], [467, 16], [471, 14], [482, 5], [500, 2], [514, 3]]);
    s += wave([[516, 4], [524, 17], [526, 2], [530, 6], [535, 1], [538, 13], [543, 6], [547, 4], [551, 13], [558, 12], [561, 2], [565, 10], [568, 1], [574, 10], [587, 6]]);
    s += cuts(cut);
    // stack of very short clips
    for (let x = 131; x < 154; x += 3) s += `<path d="M${x + 0.5} 0v96" stroke="#8d9894" stroke-width="2"/>`;
    s += cuts([153, 242]) + cuts(mid) + cuts(tail) + fadeOut(587);
    s += '<path d="M344 12Q404 31 425 93M433 12v84" stroke="#9c8a2e" fill="none" stroke-width="1.5"/><path d="M434 12v84" stroke="#b39a28" stroke-width="3"/><path d="M344.5 12v16" stroke="#6b6f6d"/>';
    return s;
}
function lane2() {
    const a = [];
    for (let x = 9; x < 449; x += 9.2) a.push(Math.round(x));
    const b = [458, 473, 487, 501, 516, 531, 545, 559, 574];
    let s = rect(0, 449) + rect(458, 588) + params(0, 449) + params(458, 588);
    s += hline(0, 449, 73.5, '#38ad85') + hline(458, 588, 73.5, '#38ad85');
    s += wave([[130, 5], [133, 4], [137, 1]]) + wave([[355, 5], [359, 4], [363, 1]]);
    b.forEach(x => { s += wave([[x + 6, 1], [x + 10, 7], [x + 11, 3], [x + 12, 0]]) + hline(x + 4, x + 8, 7.5, '#7b8783'); });
    return s + cuts([0, ...a]) + fadeOut(449) + cuts(b) + fadeOut(588);
}
function lane3() {
    let s = rect(0, 588) + params(0, 588);
    s += wave([[0, 1], [6, 10], [20, 9], [36, 10], [39, 13], [42, 8], [70, 7], [100, 5], [133, 8], [160, 5], [200, 5], [220, 8], [240, 11], [252, 16], [262, 11], [275, 10], [290, 7], [316, 3]]);
    s += wave([[317, 1], [326, 10], [345, 8], [357, 12], [364, 8], [400, 4], [440, 6], [455, 8], [470, 5], [530, 5], [545, 9], [560, 11], [575, 17], [580, 12], [588, 10]]);
    return s + cuts([0, 317]) + fadeOut(588);
}

const label = (x, text, chev) => `<span class="label" style="left:${pct(x)}">${text}</span>` +
    (chev ? `<svg class="w8 chev" style="left:${pct(chev - 4)}"><use href="#i-down"/></svg>` : '');
const badge = (x, star) => `<span class="badges" style="left:${pct(x)}">${icon('vol', 'bars')}${star ? `<b></b><span class="ring">${icon('asterisk')}</span>` : ''}</span>`;
const badges3 = x => `<span class="badges" style="left:${pct(x)}"><span class="ring">${icon('vol')}</span>14.0 dB<span class="ring"><i>fx</i></span><span class="ring">${icon('asterisk')}</span></span>`;

const lanes = [
    { art: lane1(), over: label(4, 'S...', 28) + label(41, 'ST...') + label(64, '..') + label(155, 'STE-022 Audio Ex...', 231) +
        label(244, 'STE-022 Audio Extracted_65 Audio Extracted...', 417) + label(473, 'STE-022 ...') + label(571, 'S...') +
        badge(11) + badge(46) + badge(160, true) + badge(249, true) + badge(478, true) },
    { art: lane2(), over: '' },
    { art: lane3(), over: label(2, 'STE-022 Audio Extracted_21 Audio Extracted Audio Extracted Audio Extracted Audio ...', 311) +
        label(319, 'STE-022 Audio Extracted_21 Audio Extracted Audio Extracted Audio Ext...', 582) + badges3(5) + badges3(321) }
];

const tick = (side, top) => `<i class="tick ${side}" style="top:${top}px"></i>`;
const tracks = [
    { name: 'Audio 1', vol: '-1.5', turn: -15, pan: 'L1', noRec: true, meter: tick('r', 9) + tick('l', 36) },
    { name: 'Audio 2', vol: '+3.3', turn: 40, pan: 'R0.1', meter: '<i class="clip l"></i><i class="clip r"></i>' + tick('l', 9) + tick('r', 9) },
    { name: 'Audio 3', vol: '-1.5', turn: -15, pan: '0', selected: true, meter: '<i class="clip r"></i>' + tick('r', 9) + tick('l', 16) },
    { name: 'Audio 4', vol: '+0', turn: 0, pan: '0' },
    { name: 'Audio 5', vol: '+0', turn: 0, pan: '0' },
    { name: 'Mix', vol: '-4.8', turn: -50, mix: true }
];
const knob = turn => `<svg class="knob" viewBox="0 0 16 16"><circle cx="8" cy="8" r="6.700" fill="none" stroke="currentColor" stroke-width="1.500"/><path d="M8 8V2" stroke="currentColor" stroke-width="1.500" transform="rotate(${turn} 8 8)"/></svg>`;
const drop = (text, chev, name) => `<span class="drop"><select aria-label="${name}"><option>${text}</option></select>${icon(chev, 'w8')}</span>`;

byId('rows').insertAdjacentHTML('afterbegin', tracks.map((t, i) => {
    const lane = lanes[i] ? `<svg class="art" viewBox="0 0 ${W} 96" preserveAspectRatio="none">${lanes[i].art}</svg>${lanes[i].over}` : '';
    const buttons = t.mix ? '<button>M</button><button>S</button>'
        : `<button>M</button><button>S</button><button class="${t.noRec ? 'na' : ''}">R</button><button class="na">I</button>`;
    return `<div class="row ${t.selected ? 'selected' : ''} ${t.mix ? 'mix' : ''}">
        <div class="head"><div class="strip">
            <div class="name-line">${icon(t.mix ? 'mix' : 'wave')}<span class="name">${t.name}</span>${buttons}</div>
            <div class="lower">
                <div class="lines-col">
                    <div class="knob-line">${icon('vol', 'w13')}${knob(t.turn)}<output>${t.vol}</output>${t.mix ? icon('mono', 'mono') : icon('pan', 'w14') + knob(0) + `<output>${t.pan}</output>`}</div>
                    <div class="send-line">${icon('arrow', 'w11' + (t.mix ? ' flip' : ''))}${drop(t.mix ? 'Default Output' : 'None', 'right', t.name + ' output')}<button aria-label="Phase">${icon('phase', 'w11')}</button></div>
                    <div class="read-line">${icon('right', 'w8')}${drop('Read', 'down', t.name + ' automation')}</div>
                </div>
                <div class="meter">${t.meter || tick('l', 58) + tick('r', 58)}</div>
            </div>
        </div></div>
        <div class="lane">${lane}</div>
    </div>`;
}).join(''));
```
